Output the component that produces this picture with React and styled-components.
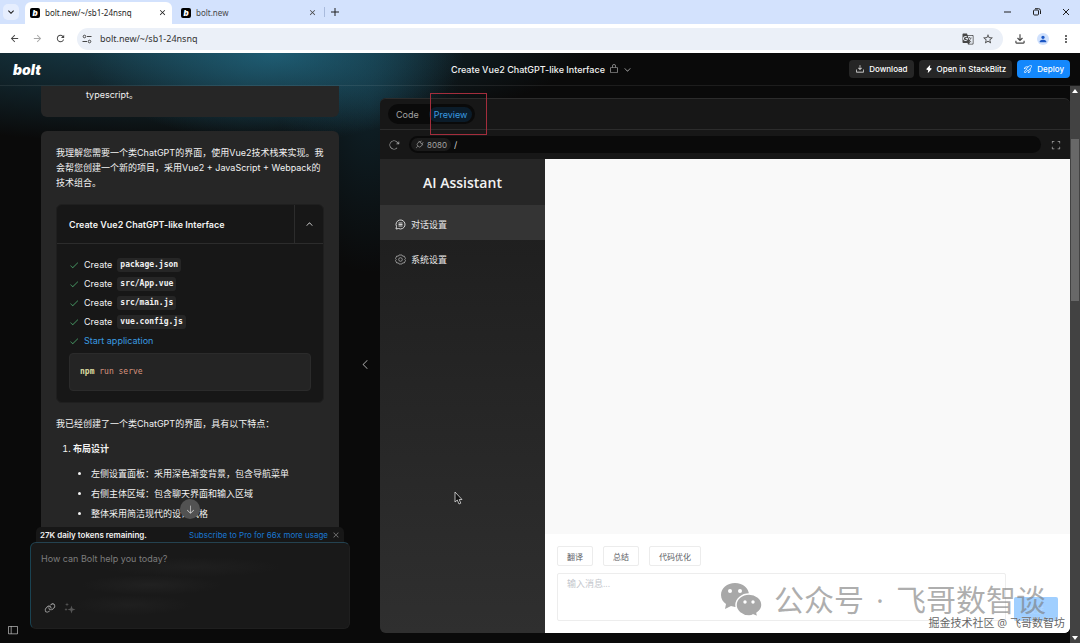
import React, { useState } from "react";
import styled, { createGlobalStyle, ThemeProvider } from "styled-components";
import {
  PiArrowClockwise,
  PiArrowDown,
  PiCaretDown,
  PiCaretLeft,
  PiCaretUp,
  PiCheck,
  PiCornersOut,
  PiDownloadSimple,
  PiLightningFill,
  PiLink,
  PiLockSimple,
  PiPlug,
  PiRocketLaunch,
  PiSidebarSimple,
  PiX
} from "react-icons/pi";
import {
  MdArrowBack,
  MdArrowForward,
  MdClose,
  MdGTranslate,
  MdKeyboardArrowDown,
  MdMoreVert,
  MdOutlineFileDownload,
  MdPerson,
  MdRefresh,
  MdStarBorder
} from "react-icons/md";

const theme = {
  uiFont: `Inter, "Noto Sans CJK SC", sans-serif`,
  chromeFont: `"Noto Sans", "Noto Sans CJK SC", sans-serif`,
  appFont: `"Open Sans", "Noto Sans CJK SC", sans-serif`,
  codeFont: `"DejaVu Sans Mono", "Liberation Mono", monospace`,
  background: "#0a0a0a",
  panel: "#171717",
  card: "#262626",
  border: "#2c2c2c",
  text: "#f2f2f2",
  muted: "#a3a3a3",
  blue: "#3a9be0",
  accent: "#1488fc"
};

const GlobalStyle = createGlobalStyle`
  * {
    box-sizing: border-box;
  }
  body {
    margin: 0;
    background: #0a0a0a;
  }
  button, input, textarea {
    font-family: inherit;
    margin: 0;
  }
  svg {
    display: block;
    flex: none;
  }
`;

const Page = styled.div`
  display: flex;
  flex-direction: column;
  height: 100vh;
  overflow: hidden;
  font-family: ${props => props.theme.uiFont};
  font-size: 9px;
  color: ${props => props.theme.text};
  background: ${props => props.theme.background};
`;

const IconButton = styled.button`
  display: flex;
  align-items: center;
  justify-content: center;
  flex: none;
  width: ${props => props.$size || 12}px;
  height: ${props => props.$size || 12}px;
  padding: 0;
  border: 0;
  background: none;
  color: inherit;
  font-size: ${props => props.$icon || 12}px;
`;

/* browser chrome */

const TabStrip = styled.div`
  display: flex;
  align-items: flex-end;
  flex: none;
  height: 24px;
  padding: 0 8px 0 3px;
  background: #d3e2fd;
  color: #1f1f1f;
  font-family: ${props => props.theme.chromeFont};
  font-size: 8px;
`;

const TabSearch = styled(IconButton)`
  align-self: center;
  margin-right: 6px;
  border-radius: 5px;
  background: #e6eefe;
`;

const BrowserTab = styled.div`
  display: flex;
  align-items: center;
  gap: 5px;
  width: ${props => (props.$active ? 147 : 152)}px;
  height: 22px;
  padding: 0 5px 1px ${props => (props.$active ? 5 : 9)}px;
  border-radius: 6px 6px 0 0;
  background: ${props => (props.$active ? "#fff" : "none")};
  color: ${props => (props.$active ? "#1f1f1f" : "#474747")};
`;

const Favicon = styled.span`
  display: flex;
  align-items: center;
  justify-content: center;
  width: 10px;
  height: 10px;
  border-radius: 2px;
  background: #000;
  color: #fff;
  font: italic 900 8px Inter, sans-serif;
`;

const TabTitle = styled.span`
  flex: 1;
  white-space: nowrap;
`;

const NewTab = styled(IconButton)`
  align-self: center;
  width: 21px;
  height: 10px;
  border-left: 1px solid #a9bbdd;
`;

const WindowControls = styled.div`
  display: flex;
  align-self: center;
  gap: 17px;
  margin-left: auto;
`;

const AddressRow = styled.div`
  display: flex;
  align-items: center;
  gap: 11px;
  flex: none;
  height: 29px;
  padding: 0 8px;
  background: #fff;
  color: #474747;
  font-family: ${props => props.theme.chromeFont};
`;

const AddressBar = styled.div`
  display: flex;
  align-items: center;
  gap: 8px;
  flex: 1;
  height: 22px;
  padding: 0 9px 0 5px;
  border-radius: 11px;
  background: #ebf0f8;
`;

const AddressInput = styled.input`
  flex: 1;
  min-width: 0;
  padding: 0;
  border: 0;
  outline: 0;
  background: none;
  color: #333;
  font-size: 9px;
`;

const Avatar = styled.span`
  display: flex;
  align-items: center;
  justify-content: center;
  width: 12px;
  height: 12px;
  border-radius: 50%;
  background: #d0e1fd;
  color: #1a56c4;
`;

/* bolt shell */

const Shell = styled.div`
  display: flex;
  flex-direction: column;
  flex: 1;
  min-height: 0;
  background: radial-gradient(
      ellipse 190px 90px at 275px 0,
      rgba(36, 116, 145, 0.65),
      transparent
    ),
    radial-gradient(
      ellipse 440px 110px at 160px -20px,
      rgba(30, 84, 104, 0.75),
      transparent
    ),
    radial-gradient(
      ellipse 90px 170px at 370px 50px,
      rgba(22, 66, 84, 0.4),
      transparent
    );
`;

const AppHeader = styled.header`
  display: grid;
  grid-template-columns: 1fr auto 1fr;
  align-items: center;
  flex: none;
  height: 33px;
  padding: 0 10px 0 13px;
  border-bottom: 1px solid rgba(255, 255, 255, 0.08);
`;

const Logo = styled.a`
  color: #fff;
  font-size: 14px;
  font-style: italic;
  font-weight: 900;
  text-decoration: none;
`;

const ProjectTitle = styled.div`
  display: flex;
  align-items: center;
  gap: 4px;
  font-size: 9px;
  font-weight: 500;
`;

const HeaderActions = styled.div`
  display: flex;
  justify-content: flex-end;
  gap: 5px;
`;

const ActionButton = styled.button`
  display: flex;
  align-items: center;
  gap: 4px;
  height: 18px;
  padding: 0 6px;
  border: 0;
  border-radius: 4px;
  background: ${props =>
    props.$primary ? props.theme.accent : props.theme.card};
  color: #fff;
  font-size: 8px;
  font-weight: 500;
  white-space: nowrap;
`;

const Body = styled.div`
  display: flex;
  flex: 1;
  min-height: 0;
`;

/* chat */

const ChatColumn = styled.section`
  display: flex;
  flex-direction: column;
  flex: none;
  width: 350px;
`;

const Messages = styled.div`
  position: relative;
  flex: 1;
  min-height: 0;
  padding: 0 11px 0 41px;
  overflow: hidden;
`;

const UserMessage = styled.div`
  height: 31px;
  margin-bottom: 14px;
  padding: 1px 45px;
  border-radius: 0 0 6px 6px;
  background: ${props => props.theme.card};
  line-height: 15px;
`;

const BotMessage = styled.div`
  padding: 14px 15px;
  border-radius: 6px;
  background: ${props => props.theme.card};
  line-height: 15px;
`;

const Paragraph = styled.p`
  margin: 0 0 ${props => (props.$tight ? 10 : 14)}px;
`;

const Artifact = styled.div`
  margin-bottom: 13px;
  border: 1px solid #1f1f1f;
  border-radius: 6px;
  background: ${props => props.theme.panel};
`;

const ArtifactHeader = styled.div`
  display: flex;
  height: 39px;
  border-bottom: 1px solid ${props => props.theme.border};
`;

const ArtifactTitle = styled.button`
  flex: 1;
  padding: 0 12px;
  border: 0;
  background: none;
  color: inherit;
  font-size: 9px;
  font-weight: 600;
  text-align: left;
`;

const ArtifactToggle = styled.button`
  display: flex;
  align-items: center;
  justify-content: center;
  width: 29px;
  padding: 0;
  border: 0;
  border-left: 1px solid ${props => props.theme.border};
  background: none;
  color: inherit;
`;

const ArtifactBody = styled.div`
  padding: 11px 12px;
`;

const Steps = styled.ul`
  margin: 0 0 3px;
  padding: 0;
  list-style: none;
`;

const Step = styled.li`
  display: flex;
  align-items: center;
  gap: 5px;
  height: 19px;
  color: ${props => (props.$link ? props.theme.blue : "inherit")};

  svg {
    color: #4ba36a;
  }
`;

const FileName = styled.code`
  padding: 0 3px;
  border-radius: 3px;
  background: ${props => props.theme.card};
  font-family: ${props => props.theme.codeFont};
  font-size: 8px;
  font-weight: 700;
  line-height: 14px;
`;

const CommandBlock = styled.pre`
  margin: 0;
  padding: 11px 10px;
  border: 1px solid #2b2b2b;
  border-radius: 4px;
  background: #242424;
  color: #d9947f;
  font-family: ${props => props.theme.codeFont};
  font-size: 8px;
  line-height: 14px;

  b {
    color: #dcdca0;
  }
`;

const Features = styled.ol`
  margin: 0;
  padding-left: 17px;
`;

const FeatureList = styled.ul`
  margin: 8px 0 0;
  padding-left: 18px;
  list-style: disc;
  line-height: 20px;
`;

const ScrollDown = styled.button`
  position: absolute;
  bottom: 8px;
  left: 180px;
  display: flex;
  align-items: center;
  justify-content: center;
  width: 20px;
  height: 20px;
  padding: 0;
  border: 0;
  border-radius: 50%;
  background: #525252;
  color: #d4d4d4;
`;

const PromptArea = styled.div`
  display: grid;
  grid-template-columns: 30px 1fr;
  flex: none;
  padding-bottom: 7px;
  background: ${props => props.theme.background};
`;

const SidebarButton = styled(IconButton)`
  align-self: end;
  justify-self: center;
  margin-right: 5px;
  color: #b5b5b5;
`;

const TokenBar = styled.div`
  display: flex;
  align-items: center;
  gap: 4px;
  height: 15px;
  margin: 0 6px;
  padding: 0 4px;
  border-radius: 5px 5px 0 0;
  background: ${props => props.theme.panel};
  font-size: 8px;

  strong {
    flex: 1;
    font-weight: 600;
  }
`;

const SubscribeLink = styled.a`
  color: #1a78d2;
  text-decoration: none;
`;

const PromptBox = styled.div`
  height: 87px;
  margin-bottom: 7px;
  padding: 9px 10px;
  border: 1px solid #1f1f1f;
  border-top-color: #244250;
  border-left-color: #1a4352;
  border-radius: 6px;
  background: radial-gradient(
      ellipse 90px 10px at 160px 24px,
      #1f1f1f,
      transparent
    ),
    radial-gradient(ellipse 70px 10px at 120px 42px, #212121, transparent),
    radial-gradient(ellipse 60px 10px at 100px 62px, #1f1f1f, transparent),
    #191919;
`;

const PromptInput = styled.textarea`
  display: block;
  width: 100%;
  height: 46px;
  padding: 0;
  border: 0;
  outline: 0;
  resize: none;
  background: none;
  color: ${props => props.theme.text};
  font-size: 9px;
  line-height: 14px;

  &::placeholder {
    color: #7d7d7d;
  }
`;

const PromptTools = styled.div`
  display: flex;
  gap: 8px;
  padding: 4px 3px;
  color: #b0b0b0;
`;

const CollapseHandle = styled.button`
  display: flex;
  align-items: center;
  justify-content: center;
  flex: none;
  width: 30px;
  padding: 0;
  border: 0;
  background: none;
  color: ${props => props.theme.muted};
`;

/* workbench */

const Workbench = styled.section`
  display: flex;
  flex-direction: column;
  flex: 1;
  min-width: 0;
  margin: 12px 0 10px;
  border-radius: 6px;
  background: ${props => props.theme.panel};
`;

const WorkbenchTabs = styled.div`
  display: flex;
  align-items: center;
  flex: none;
  height: 32px;
  padding: 0 8px;
  border-top: 1px solid ${props => props.theme.border};
  border-bottom: 1px solid ${props => props.theme.border};
  border-radius: 6px 6px 0 0;
`;

const TabGroup = styled.div`
  display: flex;
  align-items: center;
  gap: 5px;
  height: 20px;
  padding: 0 3px;
  border-radius: 10px;
  background: ${props => props.theme.background};
`;

const TabButton = styled.button`
  position: relative;
  height: 15px;
  padding: 0 5px;
  border: 0;
  border-radius: 8px;
  background: ${props => (props.$active ? "#0b1c2a" : "none")};
  color: ${props => (props.$active ? props.theme.blue : props.theme.muted)};
  font-size: 9px;
`;

const Marker = styled.span`
  position: absolute;
  top: -14px;
  left: 1px;
  width: 57px;
  height: 42px;
  border: 1px solid #a32d3c;
  pointer-events: none;
`;

const PreviewBar = styled.div`
  display: flex;
  align-items: center;
  gap: 9px;
  flex: none;
  height: 29px;
  padding: 0 8px;
  color: ${props => props.theme.muted};
`;

const PreviewAddress = styled.div`
  display: flex;
  align-items: center;
  gap: 3px;
  flex: 1;
  height: 17px;
  padding: 0 2px;
  border-radius: 9px;
  background: ${props => props.theme.background};
`;

const PortButton = styled.button`
  display: flex;
  align-items: center;
  gap: 3px;
  height: 13px;
  padding: 0 4px;
  border: 0;
  border-radius: 7px;
  background: #1a1a1a;
  color: inherit;
  font-size: 8px;
`;

const PathInput = styled.input`
  flex: 1;
  min-width: 0;
  padding: 0;
  border: 0;
  outline: 0;
  background: none;
  color: #d0d0d0;
  font-size: 9px;
`;

const PreviewFrame = styled.div`
  position: relative;
  display: flex;
  flex: 1;
  min-height: 0;
  border-radius: 0 0 6px 6px;
  overflow: hidden;
  font-family: ${props => props.theme.appFont};
`;

const AssistantNav = styled.nav`
  flex: none;
  width: 165px;
  background: linear-gradient(#1c1c1c, #2f2f2f);
`;

const AssistantTitle = styled.h1`
  height: 46px;
  margin: 0;
  background: #262626;
  font-size: 14px;
  font-weight: 600;
  line-height: 48px;
  text-align: center;
`;

const NavItem = styled.a`
  display: flex;
  align-items: center;
  gap: 5px;
  height: 35px;
  padding: 3px 15px 0;
  background: ${props => (props.$active ? "#343434" : "none")};
  color: #e8e8e8;
  text-decoration: none;
`;

const AssistantMain = styled.main`
  display: flex;
  flex-direction: column;
  flex: 1;
  min-width: 0;
  background: #f9f9f9;
`;

const Conversation = styled.div`
  flex: 1;
`;

const Composer = styled.form`
  padding: 12px;
  background: #fff;
`;

const QuickActions = styled.div`
  display: flex;
  gap: 10px;
  margin-bottom: 7px;
`;

const QuickAction = styled.button`
  height: 20px;
  padding: 0 9px;
  border: 1px solid #ececec;
  border-radius: 2px;
  background: #fff;
  color: #606266;
  font-size: 8px;
`;

const ComposerRow = styled.div`
  display: flex;
  align-items: flex-end;
  gap: 8px;
`;

const MessageInput = styled.textarea`
  flex: 1;
  height: 48px;
  padding: 3px 9px;
  border: 1px solid #ededed;
  border-radius: 2px;
  outline: 0;
  resize: none;
  font-size: 9px;
  line-height: 14px;

  &::placeholder {
    color: #c3c6cc;
  }
`;

const SendButton = styled.button`
  width: 44px;
  height: 24px;
  padding: 0;
  border: 0;
  border-radius: 2px;
  background: #a0cfff;
  color: #b4d9ff;
  font-size: 8px;
`;

const Watermark = styled.div`
  position: absolute;
  right: 24px;
  bottom: 14px;
  display: flex;
  align-items: center;
  gap: 12px;
  color: rgba(120, 120, 120, 0.6);
  font-size: 30px;
  line-height: 38px;
  white-space: nowrap;
  pointer-events: none;
`;

const Credit = styled.div`
  position: absolute;
  right: 5px;
  bottom: 2px;
  color: #666;
  font-size: 11px;
  line-height: 16px;
  text-shadow: 0 0 1px #fff;
  white-space: nowrap;
  pointer-events: none;
`;

const Pointer = styled.svg`
  position: absolute;
  top: 332px;
  left: 74px;
`;

const PageScrollbar = styled.div`
  display: flex;
  flex-direction: column;
  flex: none;
  align-items: center;
  width: 10px;
  padding: 3px 0;
  background: #424242;
`;

const ScrollThumb = styled.div`
  width: 8px;
  height: 162px;
  margin: 46px 0 auto;
  background: #686868;
`;

const ScrollArrow = styled.svg`
  fill: #fff;
`;

const files = ["package.json", "src/App.vue", "src/main.js", "vue.config.js"];

const features = [
  "左侧设置面板：采用深色渐变背景，包含导航菜单",
  "右侧主体区域：包含聊天界面和输入区域",
  "整体采用简洁现代的设计风格"
];

const quickActions = ["翻译", "总结", "代码优化"];

const SiteInfoIcon = () => (
  <svg width="10" height="10" viewBox="0 0 20 20" fill="none" stroke="currentColor" strokeWidth="2">
    <circle cx="5" cy="5" r="2.6" />
    <path d="M10 5h9M1 15h9" />
    <circle cx="15" cy="15" r="2.6" />
  </svg>
);

const StarsIcon = () => (
  <svg width="12" height="12" viewBox="0 0 24 24" fill="#555">
    <path d="M15 7l2 6 6 2-6 2-2 6-2-6-6-2 6-2z" />
    <path d="M6 1l1 3 3 1-3 1-1 3-1-3-3-1 3-1zM4 12l1 2 2 1-2 1-1 2-1-2-2-1 2-1z" />
  </svg>
);

const ChatIcon = () => (
  <svg width="11" height="11" viewBox="0 0 22 22" fill="none" stroke="currentColor" strokeWidth="1.8">
    <path d="M2 20l1-5a9 9 0 1 1 4 4z" />
    <path d="M7 8h8M7 11h8M7 14h8" />
  </svg>
);

const SettingIcon = () => (
  <svg width="11" height="11" viewBox="0 0 22 22" fill="none" stroke="#aaa" strokeWidth="1.6">
    <path d="M8 2h6l1.500 2.500 3-.2 2.500 5L19.500 11l1.500 2-2.500 5-3-.4L14 20H8l-1.500-2.400-3 .4L1 13l1.500-2L1 9l2.500-5 3 .5z" />
    <circle cx="11" cy="11" r="3.600" />
  </svg>
);

const WechatIcon = () => (
  <svg width="42" height="36" viewBox="0 0 42 36" fill="#a8a8a8">
    <path d="M15 1C7 1 1 6 1 13c0 4 2 7 5 9l-1 5 6-3c1 0 3 1 4 1 8 0 14-5 14-12S23 1 15 1z" />
    <path
      d="M29 12c-7 0-13 5-13 11s6 11 13 11c2 0 3 0 4-1l5 2-1-4c3-2 5-5 5-8 0-6-6-11-13-11z"
      stroke="#fff"
      strokeWidth="1.500"
    />
    <g fill="#fff">
      <circle cx="10" cy="9" r="2" />
      <circle cx="20" cy="9" r="2" />
      <circle cx="25" cy="20" r="1.700" />
      <circle cx="33" cy="20" r="1.700" />
    </g>
  </svg>
);

const BrowserChrome = () => (
  <>
    <TabStrip>
      <TabSearch $size={16} aria-label="Search tabs">
        <MdKeyboardArrowDown size={12} />
      </TabSearch>
      <BrowserTab $active>
        <Favicon>b</Favicon>
        <TabTitle>bolt.new/~/sb1-24nsnq</TabTitle>
        <IconButton $size={10} $icon={9} aria-label="Close tab">
          <MdClose />
        </IconButton>
      </BrowserTab>
      <BrowserTab>
        <Favicon>b</Favicon>
        <TabTitle>bolt.new</TabTitle>
        <IconButton $size={14} $icon={9} aria-label="Close tab">
          <MdClose />
        </IconButton>
      </BrowserTab>
      <NewTab aria-label="New tab">
        <svg width="8" height="8" stroke="currentColor">
          <path d="M4 0v8M0 4h8" />
        </svg>
      </NewTab>
      <WindowControls>
        <IconButton aria-label="Minimize">
          <svg width="8" height="8" stroke="currentColor">
            <path d="M0 4h7" />
          </svg>
        </IconButton>
        <IconButton aria-label="Restore">
          <svg width="8" height="8" fill="none" stroke="currentColor">
            <rect x=".5" y="2" width="5" height="5" rx="1" />
            <path d="M2 .7h3.500q2 0 2 2V6" />
          </svg>
        </IconButton>
        <IconButton aria-label="Close">
          <svg width="8" height="8" stroke="currentColor">
            <path d="M1 1l6 6M7 1L1 7" />
          </svg>
        </IconButton>
      </WindowControls>
    </TabStrip>
    <AddressRow>
      <IconButton aria-label="Back">
        <MdArrowBack size={11} />
      </IconButton>
      <IconButton aria-label="Forward">
        <MdArrowForward size={11} color="#a8a8a8" />
      </IconButton>
      <IconButton aria-label="Reload">
        <MdRefresh size={11} />
      </IconButton>
      <AddressBar>
        <SiteInfoIcon />
        <AddressInput aria-label="Address" defaultValue="bolt.new/~/sb1-24nsnq" />
        <MdGTranslate size={12} />
        <MdStarBorder size={12} />
      </AddressBar>
      <IconButton aria-label="Downloads">
        <MdOutlineFileDownload size={14} />
      </IconButton>
      <Avatar>
        <MdPerson size={10} />
      </Avatar>
      <IconButton aria-label="Menu">
        <MdMoreVert size={12} />
      </IconButton>
    </AddressRow>
  </>
);

const Chat = () => {
  const [open, setOpen] = useState(true);

  return (
    <ChatColumn>
      <Messages>
        <UserMessage>typescript。</UserMessage>
        <BotMessage>
          <Paragraph>
            我理解您需要一个类ChatGPT的界面，使用Vue2技术栈来实现。我会帮您创建一个新的项目，采用Vue2
            + JavaScript + Webpack的技术组合。
          </Paragraph>
          <Artifact>
            <ArtifactHeader>
              <ArtifactTitle>Create Vue2 ChatGPT-like Interface</ArtifactTitle>
              <ArtifactToggle
                aria-label="Toggle actions"
                onClick={() => setOpen(!open)}
              >
                {open ? <PiCaretUp size={9} /> : <PiCaretDown size={9} />}
              </ArtifactToggle>
            </ArtifactHeader>
            {open && (
              <ArtifactBody>
                <Steps>
                  {files.map(file => (
                    <Step key={file}>
                      <PiCheck size={10} />
                      Create <FileName>{file}</FileName>
                    </Step>
                  ))}
                  <Step $link>
                    <PiCheck size={10} />
                    Start application
                  </Step>
                </Steps>
                <CommandBlock>
                  <b>npm</b> run serve
                </CommandBlock>
              </ArtifactBody>
            )}
          </Artifact>
          <Paragraph $tight>
            我已经创建了一个类ChatGPT的界面，具有以下特点：
          </Paragraph>
          <Features>
            <li>
              <strong>布局设计</strong>
              <FeatureList>
                {features.map(feature => (
                  <li key={feature}>{feature}</li>
                ))}
              </FeatureList>
            </li>
          </Features>
        </BotMessage>
        <ScrollDown aria-label="Scroll to bottom">
          <PiArrowDown size={11} />
        </ScrollDown>
      </Messages>
      <PromptArea>
        <SidebarButton aria-label="Open sidebar">
          <PiSidebarSimple size={12} />
        </SidebarButton>
        <div>
          <TokenBar>
            <strong>27K daily tokens remaining.</strong>
            <SubscribeLink href="#pro">
              Subscribe to Pro for 66x more usage
            </SubscribeLink>
            <IconButton $size={8} $icon={8} aria-label="Dismiss">
              <PiX color="#999" />
            </IconButton>
          </TokenBar>
          <PromptBox>
            <PromptInput
              aria-label="Prompt"
              placeholder="How can Bolt help you today?"
            />
            <PromptTools>
              <IconButton aria-label="Attach">
                <PiLink size={12} />
              </IconButton>
              <IconButton aria-label="Enhance prompt">
                <StarsIcon />
              </IconButton>
            </PromptTools>
          </PromptBox>
        </div>
      </PromptArea>
    </ChatColumn>
  );
};

const Assistant = () => (
  <PreviewFrame>
    <AssistantNav>
      <AssistantTitle>AI Assistant</AssistantTitle>
      <NavItem href="#chat" $active>
        <ChatIcon />
        对话设置
      </NavItem>
      <NavItem href="#system">
        <SettingIcon />
        系统设置
      </NavItem>
    </AssistantNav>
    <AssistantMain>
      <Conversation />
      <Composer onSubmit={e => e.preventDefault()}>
        <QuickActions>
          {quickActions.map(action => (
            <QuickAction type="button" key={action}>
              {action}
            </QuickAction>
          ))}
        </QuickActions>
        <ComposerRow>
          <MessageInput aria-label="输入消息" placeholder="输入消息..." />
          <SendButton>发送</SendButton>
        </ComposerRow>
      </Composer>
    </AssistantMain>
    <Watermark>
      <WechatIcon />
      <span>公众号</span>
      <span>·</span>
      <span>飞哥数智谈</span>
    </Watermark>
    <Credit>掘金技术社区 @ 飞哥数智坊</Credit>
    <Pointer width="9" height="14" viewBox="0 0 9 14">
      <path
        d="M1 1v10l2.300-2 1.700 4 1.800-.8L5.200 8.500H8z"
        fill="#111"
        stroke="#ddd"
        strokeWidth=".8"
      />
    </Pointer>
  </PreviewFrame>
);

const App = () => {
  const [tab, setTab] = useState("Preview");

  return (
    <ThemeProvider theme={theme}>
      <GlobalStyle />
      <Page>
        <BrowserChrome />
        <Shell>
          <AppHeader>
            <div>
              <Logo href="#home">bolt</Logo>
            </div>
            <ProjectTitle>
              Create Vue2 ChatGPT-like Interface
              <PiLockSimple size={10} color="#bbb" />
              <PiCaretDown size={9} color="#bbb" />
            </ProjectTitle>
            <HeaderActions>
              <ActionButton>
                <PiDownloadSimple size={10} />
                Download
              </ActionButton>
              <ActionButton>
                <PiLightningFill size={8} />
                Open in StackBlitz
              </ActionButton>
              <ActionButton $primary>
                <PiRocketLaunch size={10} />
                Deploy
              </ActionButton>
            </HeaderActions>
          </AppHeader>
          <Body>
            <Chat />
            <CollapseHandle aria-label="Collapse chat">
              <PiCaretLeft size={13} />
            </CollapseHandle>
            <Workbench>
              <WorkbenchTabs>
                <TabGroup>
                  {["Code", "Preview"].map(name => (
                    <TabButton
                      key={name}
                      $active={tab === name}
                      onClick={() => setTab(name)}
                    >
                      {name}
                      {name === "Preview" && <Marker />}
                    </TabButton>
                  ))}
                </TabGroup>
              </WorkbenchTabs>
              <PreviewBar>
                <IconButton aria-label="Reload preview">
                  <PiArrowClockwise size={12} />
                </IconButton>
                <PreviewAddress>
                  <PortButton>
                    <PiPlug size={9} />
                    8080
                  </PortButton>
                  <PathInput aria-label="Path" defaultValue="/" />
                </PreviewAddress>
                <IconButton aria-label="Full screen">
                  <PiCornersOut size={12} />
                </IconButton>
              </PreviewBar>
              <Assistant />
            </Workbench>
            <PageScrollbar>
              <ScrollArrow width="6" height="4">
                <path d="M0 4l3-4 3 4z" />
              </ScrollArrow>
              <ScrollThumb />
              <ScrollArrow width="6" height="4">
                <path d="M0 0l3 4 3-4z" />
              </ScrollArrow>
            </PageScrollbar>
          </Body>
        </Shell>
      </Page>
    </ThemeProvider>
  );
};

export default App;
